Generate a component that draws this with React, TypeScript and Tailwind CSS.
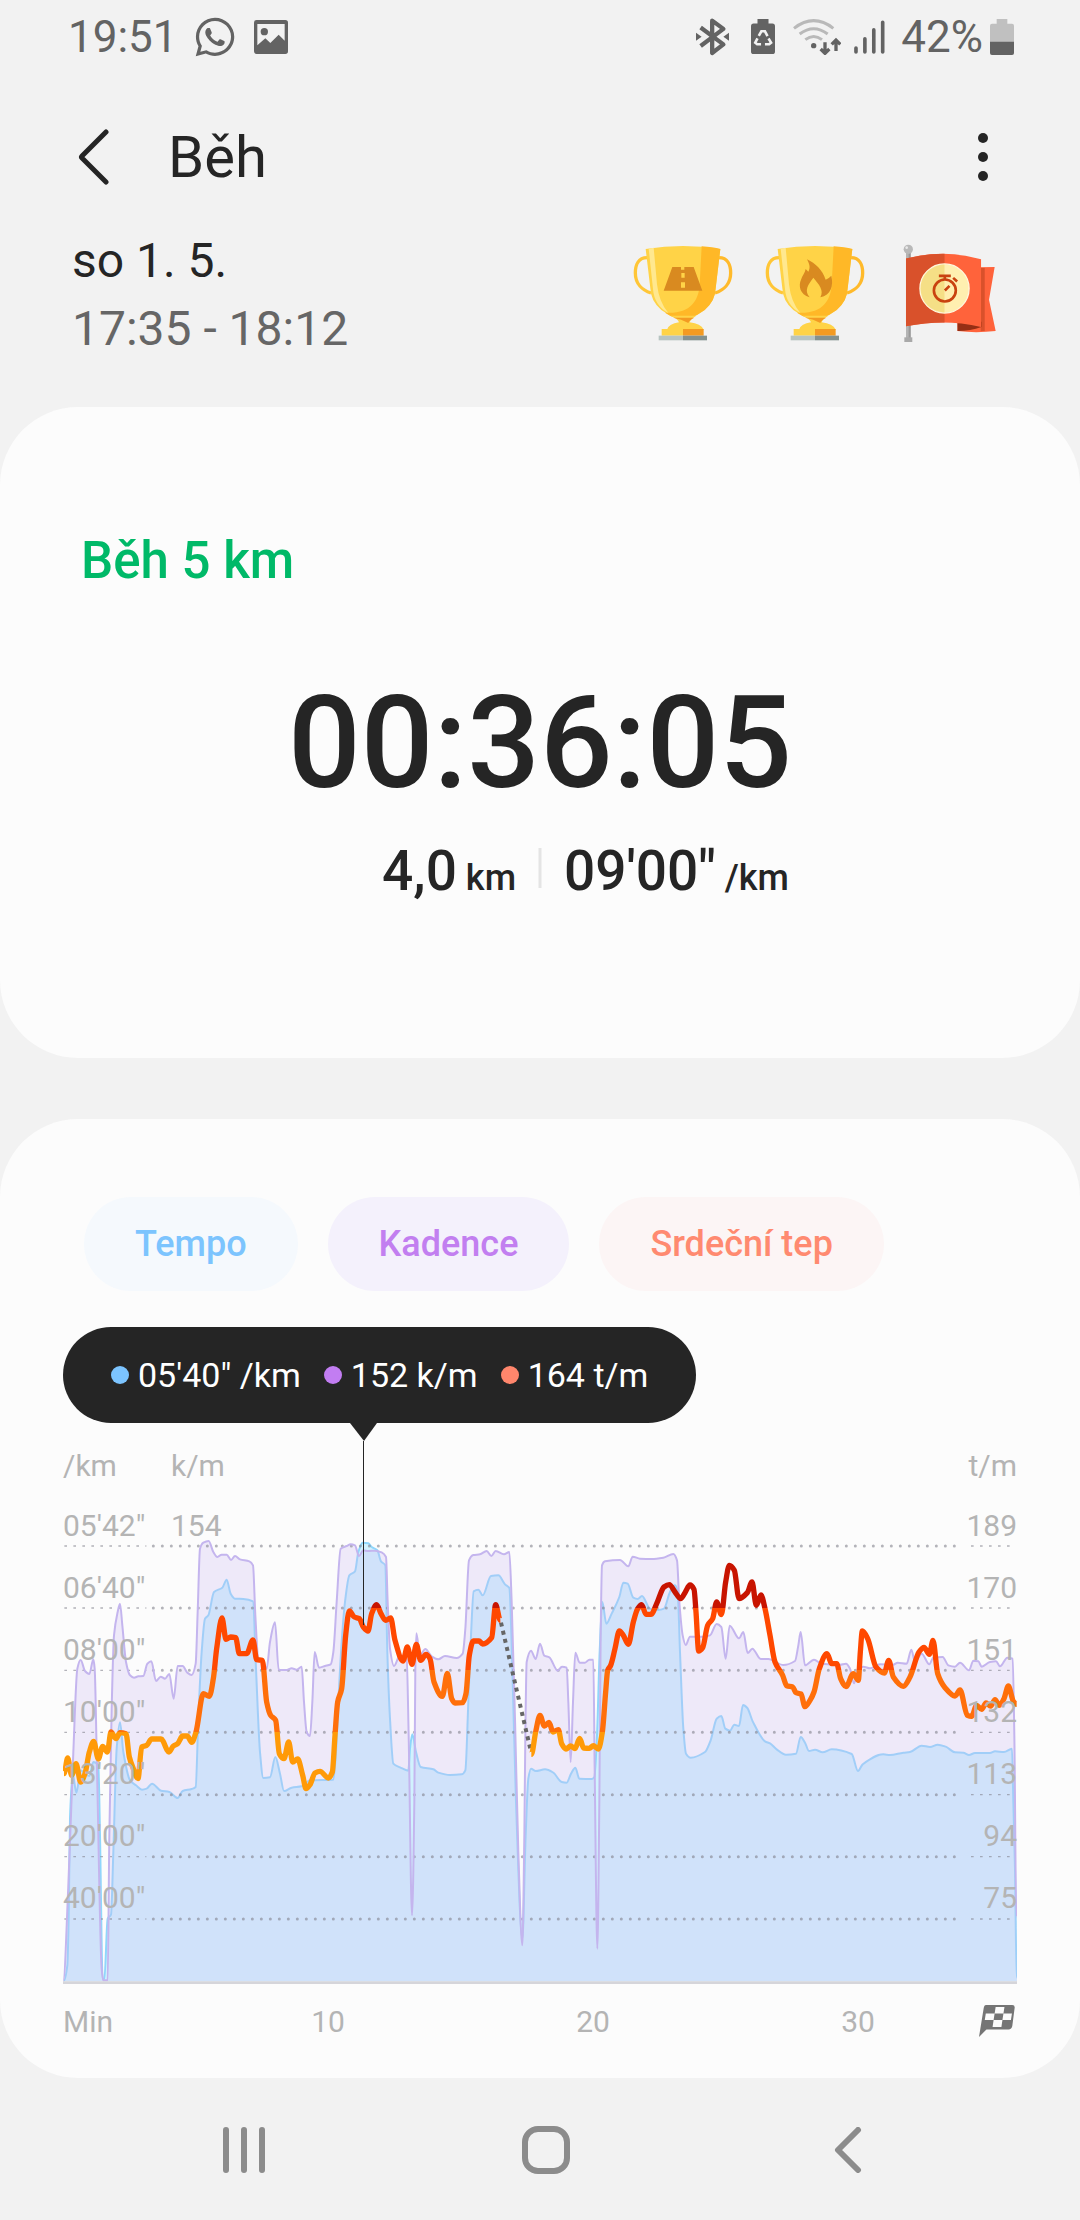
import type { ReactNode } from "react";
import { FaWhatsapp } from "react-icons/fa";

type Point = [number, number];

const PLOT_WIDTH = 2862;
const PLOT_BOTTOM = 1438;
const TOTAL_MINUTES = 36;

const cadence: Point[] = [
  [1, 1435], [16, 1150], [31, 750], [43, 500], [53, 474], [66, 507], [79, 516], [91, 472], [95, 500],
  [102, 800], [116, 1400], [121, 1435], [134, 1435], [139, 1000], [146, 620], [153, 400], [164, 330],
  [171, 305], [178, 370], [189, 480], [201, 520], [213, 527], [226, 523], [241, 522], [253, 485],
  [265, 478], [279, 537], [293, 524], [306, 530], [319, 516], [332, 590], [344, 492], [359, 492],
  [373, 512], [386, 519], [398, 485], [404, 330], [411, 140], [421, 122], [437, 117], [451, 150],
  [463, 165], [476, 158], [491, 158], [504, 174], [516, 162], [531, 172], [559, 178], [570, 190],
  [577, 340], [586, 470], [598, 475], [611, 500], [621, 420], [636, 361], [647, 503], [671, 504],
  [686, 499], [701, 503], [716, 494], [723, 600], [731, 690], [741, 702], [748, 600], [755, 450],
  [768, 497], [786, 492], [803, 487], [811, 450], [821, 300], [833, 140], [851, 132], [863, 127],
  [876, 130], [888, 162], [901, 145], [916, 147], [936, 146], [956, 151], [969, 165], [974, 300],
  [981, 440], [993, 492], [1011, 460], [1031, 470], [1037, 700], [1047, 1240], [1054, 900], [1057, 500],
  [1060, 394], [1071, 460], [1087, 441], [1106, 463], [1126, 472], [1146, 462], [1181, 468],
  [1199, 455], [1207, 380], [1218, 175], [1231, 159], [1251, 157], [1271, 147], [1285, 162],
  [1298, 147], [1323, 157], [1339, 150], [1346, 300], [1356, 650], [1366, 1050], [1378, 1330],
  [1384, 1000], [1387, 700], [1391, 480], [1404, 446], [1418, 471], [1431, 425], [1444, 461],
  [1459, 466], [1484, 506], [1497, 494], [1511, 497], [1516, 600], [1523, 780], [1530, 600],
  [1537, 452], [1550, 482], [1566, 482], [1579, 473], [1591, 473], [1595, 800], [1603, 1340],
  [1609, 900], [1613, 400], [1617, 190], [1626, 178], [1671, 174], [1696, 193], [1709, 164],
  [1731, 170], [1766, 171], [1801, 167], [1831, 156], [1842, 175], [1849, 300], [1859, 400],
  [1868, 429], [1881, 404], [1921, 404], [1941, 400], [1961, 366], [1975, 375], [1988, 470],
  [2000, 371], [2028, 409], [2041, 390], [2054, 453], [2068, 440], [2093, 471], [2116, 471],
  [2161, 489], [2196, 477], [2206, 430], [2213, 390], [2226, 490], [2253, 473], [2276, 485],
  [2331, 488], [2349, 485], [2361, 500], [2373, 544], [2386, 500], [2401, 494], [2421, 499],
  [2451, 487], [2491, 488], [2504, 482], [2531, 485], [2545, 443], [2556, 480], [2576, 455],
  [2599, 487], [2611, 467], [2639, 465], [2656, 490], [2676, 494], [2691, 482], [2718, 505],
  [2731, 476], [2746, 478], [2756, 494], [2781, 480], [2799, 478], [2811, 493], [2833, 467],
  [2849, 470], [2854, 700], [2860, 1245],
];

const pace: Point[] = [
  [3, 1435], [13, 1390], [17, 1250], [21, 950], [29, 815], [40, 872], [53, 805], [66, 815], [79, 822],
  [91, 780], [106, 790], [111, 1000], [119, 1432], [124, 1432], [134, 1250], [144, 1238], [151, 1050],
  [161, 740], [171, 661], [181, 750], [201, 835], [219, 850], [237, 863], [251, 860], [267, 845],
  [294, 866], [319, 870], [344, 888], [359, 867], [386, 861], [398, 855], [406, 650], [416, 450],
  [426, 350], [436, 340], [453, 270], [478, 257], [491, 233], [503, 275], [516, 290], [541, 291],
  [570, 298], [579, 500], [591, 750], [601, 828], [621, 826], [637, 765], [651, 815], [663, 867],
  [686, 857], [716, 853], [741, 835], [811, 833], [819, 750], [826, 600], [836, 420], [846, 300],
  [859, 220], [876, 208], [886, 150], [899, 122], [916, 124], [926, 135], [943, 145], [954, 178],
  [967, 190], [973, 450], [981, 650], [991, 785], [1011, 796], [1036, 806], [1041, 740], [1048, 697],
  [1059, 750], [1073, 795], [1111, 802], [1126, 812], [1161, 819], [1196, 817], [1207, 805],
  [1216, 600], [1224, 400], [1232, 268], [1246, 263], [1259, 280], [1284, 222], [1306, 220],
  [1326, 247], [1339, 258], [1348, 500], [1359, 900], [1378, 1310], [1388, 1000], [1396, 830],
  [1404, 800], [1418, 807], [1446, 802], [1471, 812], [1496, 840], [1511, 842], [1524, 815],
  [1537, 797], [1549, 830], [1586, 831], [1594, 825], [1602, 700], [1610, 450], [1618, 300],
  [1630, 365], [1646, 335], [1669, 285], [1681, 242], [1694, 245], [1711, 287], [1724, 291],
  [1737, 282], [1761, 320], [1786, 324], [1803, 320], [1821, 270], [1836, 250], [1844, 270],
  [1851, 450], [1861, 680], [1869, 755], [1883, 767], [1926, 750], [1943, 715], [1961, 650],
  [1975, 642], [1987, 680], [2001, 686], [2014, 668], [2028, 672], [2040, 609], [2053, 618],
  [2069, 658], [2106, 718], [2121, 724], [2141, 742], [2169, 758], [2199, 755], [2213, 705],
  [2226, 722], [2238, 747], [2256, 743], [2279, 751], [2306, 742], [2366, 756], [2385, 807],
  [2399, 787], [2461, 757], [2481, 759], [2521, 752], [2541, 750], [2576, 731], [2601, 735],
  [2624, 728], [2648, 734], [2676, 751], [2701, 752], [2718, 759], [2736, 753], [2781, 753],
  [2796, 748], [2823, 750], [2847, 740], [2851, 900], [2856, 1100], [2861, 1430],
];

const heartRateStart: Point[] = [
  [3, 815], [14, 768], [26, 820], [39, 785], [53, 840], [66, 815], [79, 750], [92, 718], [106, 771],
  [119, 733], [133, 750], [144, 690], [159, 710], [171, 692], [189, 695], [199, 765], [211, 800],
  [225, 830], [236, 735], [251, 730], [266, 711], [294, 711], [318, 750], [331, 732], [344, 725],
  [359, 702], [373, 702], [386, 721], [399, 690], [421, 575], [439, 583], [451, 530], [461, 440],
  [477, 348], [489, 412], [503, 405], [518, 407], [529, 455], [551, 455], [570, 414], [581, 473],
  [598, 475], [611, 600], [623, 640], [638, 655], [649, 755], [663, 770], [677, 720], [689, 780],
  [704, 771], [719, 820], [729, 860], [741, 848], [756, 813], [771, 808], [796, 828], [808, 810],
  [816, 700], [824, 600], [836, 560], [848, 400], [859, 327], [874, 345], [889, 350], [901, 375],
  [915, 387], [926, 335], [941, 308], [954, 335], [968, 355], [983, 348], [996, 415], [1020, 477],
  [1033, 435], [1047, 487], [1060, 427], [1073, 475], [1089, 457], [1101, 470], [1113, 540],
  [1138, 583], [1153, 514], [1166, 590], [1176, 603], [1199, 602], [1209, 575], [1219, 460],
  [1231, 417], [1248, 417], [1259, 426], [1286, 407], [1298, 308], [1312, 355],
];

const heartRateEnd: Point[] = [
  [1405, 757], [1418, 690], [1431, 640], [1444, 672], [1458, 661], [1470, 690], [1486, 683],
  [1496, 725], [1509, 741], [1523, 732], [1536, 740], [1550, 709], [1562, 738], [1579, 739],
  [1591, 731], [1606, 741], [1618, 690], [1628, 570], [1634, 505], [1643, 490], [1656, 440],
  [1669, 387], [1681, 400], [1696, 427], [1711, 360], [1724, 320], [1736, 308], [1749, 337],
  [1764, 337], [1781, 305], [1803, 255], [1819, 248], [1836, 270], [1853, 290], [1866, 272],
  [1881, 249], [1893, 262], [1899, 330], [1907, 447], [1919, 437], [1934, 370], [1949, 350],
  [1961, 300], [1975, 338], [1988, 240], [1999, 190], [2014, 205], [2028, 290], [2053, 272],
  [2067, 240], [2080, 310], [2094, 279], [2106, 320], [2121, 400], [2136, 480], [2159, 520],
  [2171, 551], [2189, 555], [2199, 572], [2214, 576], [2226, 614], [2241, 595], [2253, 570],
  [2269, 500], [2292, 455], [2306, 485], [2321, 485], [2333, 530], [2349, 554], [2371, 515],
  [2386, 535], [2392, 450], [2398, 387], [2414, 410], [2439, 495], [2464, 513], [2477, 475],
  [2491, 525], [2521, 553], [2541, 525], [2568, 450], [2583, 436], [2599, 457], [2610, 415],
  [2624, 515], [2646, 557], [2676, 582], [2691, 564], [2713, 640], [2726, 643], [2741, 610],
  [2756, 622], [2769, 603], [2783, 612], [2796, 593], [2809, 610], [2823, 590], [2836, 552],
  [2851, 598], [2861, 607],
];

const gridLines = [132, 318, 505, 691, 878, 1064, 1251];

const axisRows = [
  { pace: "05'42\"", cadence: "154", pulse: "189" },
  { pace: "06'40\"", pulse: "170" },
  { pace: "08'00\"", pulse: "151" },
  { pace: "10'00\"", pulse: "132" },
  { pace: "13'20\"", pulse: "113" },
  { pace: "20'00\"", pulse: "94" },
  { pace: "40'00\"", pulse: "75" },
];

const minuteTicks = [10, 20, 30];

const readings = [
  { dot: "bg-[#7cc4ff]", text: "05'40\" /km" },
  { dot: "bg-[#c27df2]", text: "152 k/m" },
  { dot: "bg-[#ff866c]", text: "164 t/m" },
];

// Monotone cubic, so the curve never overshoots its samples
const toPath = (points: Point[]) => {
  const slope = (a: Point, b: Point) => (b[1] - a[1]) / (b[0] - a[0]);
  const tangents = points.map((point, i) => {
    if (i === 0 || i === points.length - 1) return 0;
    const before = slope(points[i - 1], point);
    const after = slope(point, points[i + 1]);
    return before * after <= 0 ? 0 : (2 * before * after) / (before + after);
  });

  return points.reduce((path, [x, y], i) => {
    if (i === 0) return `M${x} ${y}`;
    const [px, py] = points[i - 1];
    const third = (x - px) / 3;
    return `${path}C${px + third} ${py + tangents[i - 1] * third} ${x - third} ${y - tangents[i] * third} ${x} ${y}`;
  }, "");
};

const toArea = (points: Point[]) => `${toPath(points)}L${PLOT_WIDTH} ${PLOT_BOTTOM}L0 ${PLOT_BOTTOM}Z`;

const StatusBar = () => (
  <div className="flex h-[74px] items-center justify-between pl-[68px] pr-[66px] text-[44px] leading-none text-[#636363]">
    <div className="flex items-center">
      <span>19:51</span>
      <FaWhatsapp className="ml-[15px] size-[44px]" />
      <svg viewBox="0 0 102 102" className="ml-[17px] w-[34px]" fill="currentColor">
        <path
          fillRule="evenodd"
          d="M8 0H94Q102 0 102 8V94Q102 102 94 102H8Q0 102 0 94V8Q0 0 8 0ZM10 12V76L34 55L49 69L74 44L92 62V12Z"
        />
        <circle cx="31" cy="35" r="11" />
      </svg>
    </div>

    <div className="flex items-center">
      <svg viewBox="0 0 100 114" className="w-[33px]" fill="none" stroke="currentColor" strokeWidth="13">
        <path strokeLinejoin="round" d="M14 29L83 80L49 106V8L83 33L14 85" />
        <path fill="currentColor" stroke="none" d="M0 45L17 57L0 69ZM100 45L83 57L100 69Z" />
      </svg>
      <svg viewBox="0 0 74 108" className="ml-[22px] w-6">
        <path fill="currentColor" d="M20 0H54V14H66Q74 14 74 22V100Q74 108 66 108H8Q0 108 0 100V22Q0 14 8 14H20Z" />
        <g fill="none" stroke="#f2f2f2" strokeWidth="8">
          <path d="M24 52L32 38H43L51 53" />
          <path d="M20 60L13 73L19 78H31" />
          <path d="M54 60L62 73L56 78H43" />
        </g>
      </svg>
      <svg viewBox="0 0 144 108" className="ml-[18px] w-12" fill="none">
        <g stroke="#b9b9b9" strokeWidth="9">
          <path d="M3 28Q62 -18 121 28" />
          <path d="M20 45Q62 13 104 45" />
          <path d="M37 62Q62 43 87 62" />
        </g>
        <circle cx="62" cy="80" r="8" fill="currentColor" />
        <g stroke="currentColor" strokeWidth="10">
          <path d="M96 70V102M83 90L96 103L109 90" />
          <path d="M129 96V64M116 76L129 63L142 76" />
        </g>
      </svg>
      <svg viewBox="0 0 94 104" className="ml-[13px] w-[31px]" stroke="currentColor" strokeWidth="11" strokeLinecap="round">
        <path d="M6 85V97M33 57V97M60 30V97M87 7V97" />
      </svg>
      <span className="ml-4">42%</span>
      <svg viewBox="0 0 72 108" className="ml-[7px] w-6">
        <path fill="#c0c0c0" d="M20 0H52V14H66Q72 14 72 20V70H0V20Q0 14 6 14H20Z" />
        <path fill="currentColor" d="M0 68H72V102Q72 108 66 108H6Q0 108 0 102Z" />
      </svg>
    </div>
  </div>
);

const Trophy = ({ label, children }: { label: string; children: ReactNode }) => (
  <svg viewBox="0 0 300 290" className="w-[100px]" role="img" aria-label={label}>
    <path fill="none" stroke="#ffc637" strokeWidth="10" d="M42 38C16 38 7 60 7 84C7 116 28 136 54 144" />
    <path fill="none" stroke="#ffba2b" strokeWidth="10" d="M258 38C284 38 293 60 293 84C293 116 272 136 246 144" />
    <path fill="#ffd347" d="M38 12Q150 -6 262 12L248 130Q247 168 215 195Q192 212 170 220H130Q108 212 85 195Q53 168 52 130Z" />
    <path fill="#ffb827" d="M206 4Q240 6 262 12L248 130Q247 168 215 195Q192 212 170 220H130Q112 214 96 203C170 208 196 170 200 120Z" />
    <path fill="#ffe88f" d="M47 11L62 8L72 118Q78 172 106 204Q64 182 60 132Z" />
    <path fill="#ffd347" d="M112 212Q134 220 138 232Q108 236 102 254H212Q204 236 170 232Q172 222 190 212Z" />
    <path fill="#f39a22" d="M120 218H184Q168 226 166 234Q146 222 120 218Z" />
    <path fill="#ffd347" d="M86 252H150V272H86Z" />
    <path fill="#f39a22" d="M150 252H212V272H150Z" />
    <path fill="#b7c4c2" d="M77 272H150V286H77Z" />
    <path fill="#84918f" d="M150 272H222V286H150Z" />
    {children}
  </svg>
);

const FlagBadge = () => (
  <svg viewBox="0 0 280 298" className="ml-[38px] w-[93px]" role="img" aria-label="Nejlepší čas">
    <path fill="#b4b4b4" d="M9 22H23V284H9Z" />
    <path fill="#999999" d="M17 22H23V284H17Z" />
    <circle cx="16" cy="16" r="14" fill="#b9b9b9" />
    <circle cx="11" cy="11" r="4" fill="#e9e9e9" />
    <path fill="#a9a9a9" d="M4 281H28V296H4Z" />
    <path fill="#ff633b" d="M230 70L276 69L259 168L279 262Q220 269 164 262V236H230Z" />
    <path fill="#d9512b" d="M234 72H246V262H234Z" />
    <path fill="#962f14" d="M164 234H236V250Q204 262 164 262Z" />
    <path fill="#ff633b" d="M9 44Q122 14 235 46V250Q122 224 9 248Z" />
    <path fill="#d9512b" d="M9 44Q66 29 125 29V236Q66 236 9 248Z" />
    <circle cx="125" cy="134" r="74" fill="#ffefb0" stroke="#fff7dc" strokeWidth="4" />
    <path fill="#f5df86" d="M125 62A72 72 0 0 0 125 206Z" />
    <g fill="none" stroke="#c9420f" strokeWidth="8">
      <circle cx="126" cy="140" r="33" />
      <path d="M108 96H144M126 96V108M126 140L140 126M151 102L163 113" />
    </g>
  </svg>
);

const Header = () => (
  <header>
    <div className="flex h-[153px] items-center justify-between pl-[71px] pr-[84px] pt-3">
      <div className="flex items-center">
        <button aria-label="Zpět" className="p-1">
          <svg viewBox="0 0 34 58" className="h-[58px]" fill="none" stroke="#252525" strokeWidth="5" strokeLinecap="round" strokeLinejoin="round">
            <path d="M31 4L7 28Q6 29 7 30L31 54" />
          </svg>
        </button>
        <h1 className="ml-[55px] text-[58px] leading-none">Běh</h1>
      </div>
      <button aria-label="Další možnosti" className="p-2">
        <svg viewBox="0 0 10 48" className="h-12" fill="#252525">
          <circle cx="5" cy="5" r="5" />
          <circle cx="5" cy="24" r="5" />
          <circle cx="5" cy="43" r="5" />
        </svg>
      </button>
    </div>

    <div className="flex items-center justify-between pb-11 pl-[72px] pr-[84px]">
      <div className="text-[48px] leading-[68px]">
        <p>so 1. 5.</p>
        <p className="text-[#666666]">17:35 - 18:12</p>
      </div>
      <div className="flex items-center pb-1">
        <div className="flex gap-8">
          <Trophy label="Nejdelší vzdálenost">
            <path fill="#d98a20" d="M118 66H144V74H154V66H182L208 137H92Z" />
            <path fill="#ffd347" d="M145 84H155V98H145ZM144 112H156V128H144Z" />
          </Trophy>
          <Trophy label="Nejvíce kalorií">
            <path
              fill="#d98a20"
              d="M126 43C152 56 172 74 182 104Q192 100 199 92C206 122 198 150 166 157C178 136 162 118 145 98C130 118 116 136 134 157C104 148 100 122 108 104C112 92 120 84 122 72L130 80C138 66 132 56 126 43Z"
            />
          </Trophy>
        </div>
        <FlagBadge />
      </div>
    </div>
  </header>
);

const SummaryCard = () => (
  <section className="rounded-[78px] bg-[#fcfcfc] pb-[148px] pt-[124px] font-medium">
    <h2 className="px-[81px] text-[51px] leading-[60px] text-[#00b968]">Běh 5 km</h2>
    <p className="mt-[88px] text-center text-[128px] leading-none">00:36:05</p>
    <div className="mt-8 grid grid-cols-2 text-[55px] leading-[64px]">
      <p className="pr-6 text-right">
        4,0<span className="text-[36px]"> km</span>
      </p>
      <p className="relative pl-6">
        <span className="absolute left-0 top-[9px] h-10 w-[3px] -translate-x-1/2 bg-[#e4e4e4]" />
        09'00"<span className="text-[36px]"> /km</span>
      </p>
    </div>
  </section>
);

const Tooltip = () => (
  <div className="relative mt-9 flex h-24 w-max items-center gap-[23px] rounded-full bg-[#252525] px-12 text-[34px] text-white">
    {readings.map(({ dot, text }) => (
      <span key={text} className="flex items-center gap-[9px]">
        <span className={`size-[18px] rounded-full ${dot}`} />
        {text}
      </span>
    ))}
    <div className="absolute left-[287px] top-full z-10 flex w-[27px] flex-col items-center">
      <svg viewBox="0 0 27 18" className="w-[27px]" fill="#252525">
        <path d="M0 0H27L14 18Z" />
      </svg>
      <span className="h-[184px] w-px bg-[#252525]" />
    </div>
  </div>
);

const Chart = () => (
  <div className="relative">
    <svg viewBox="0 -15 2862 1461" className="block w-full" role="img" aria-label="Tempo, kadence a srdeční tep">
      <defs>
        <linearGradient id="zones" gradientUnits="userSpaceOnUse" x1="0" y1="0" x2="0" y2="1000">
          <stop offset="31.8%" stopColor="#c81400" />
          <stop offset="31.8%" stopColor="#ff4800" />
          <stop offset="50.5%" stopColor="#ff4800" />
          <stop offset="50.5%" stopColor="#ff6f0a" />
          <stop offset="69%" stopColor="#ff6f0a" />
          <stop offset="69%" stopColor="#ff9a08" />
        </linearGradient>
      </defs>

      <path d={toArea(pace)} fill="#d1f2fe" />
      <path d={toPath(pace)} fill="none" stroke="#8fd6fb" strokeWidth="6" />
      <path d={toArea(cadence)} fill="#cdbcf3" fillOpacity="0.3" />

      {gridLines.map((y) => (
        <g key={y} stroke="#82828c" strokeOpacity="0.6">
          <path d={`M4 ${y}H250`} strokeWidth="4" strokeDasharray="8 19" />
          <path d={`M271 ${y}H2700`} strokeWidth="9" strokeDasharray="0 27" strokeLinecap="round" />
          <path d={`M2724 ${y}H2850`} strokeWidth="4" strokeDasharray="8 19" />
        </g>
      ))}

      <path d={toPath(cadence)} fill="none" stroke="#c4b5ee" strokeWidth="6" strokeLinejoin="round" />
      <path d={`M0 1442H${PLOT_WIDTH}`} stroke="#d5d5da" strokeWidth="8" />

      <path d="M1314 362L1403 745" stroke="#666666" strokeWidth="12" strokeDasharray="12 13" />
      <g fill="none" stroke="url(#zones)" strokeWidth="16" strokeLinejoin="round">
        <path d={toPath(heartRateStart)} />
        <path d={toPath(heartRateEnd)} />
      </g>
    </svg>

    {/* Axis values lie over the curves */}
    <div className="absolute inset-x-0 top-0">
      {axisRows.map((row) => (
        <div key={row.pulse} className="flex h-[62px] leading-[58px]">
          <span className="w-[108px]">{row.pace}</span>
          <span>{row.cadence}</span>
          <span className="ml-auto">{row.pulse}</span>
        </div>
      ))}
    </div>
  </div>
);

const ChartCard = () => (
  <section className="mt-[61px] rounded-[78px] bg-[#fcfcfc] px-[63px] pb-[25px] pt-[78px]">
    <div className="flex gap-[30px] pl-[21px] text-[36px] font-medium">
      <button className="h-[94px] rounded-full bg-[#f5f9fd] px-[51px] text-[#7cc4fe]">Tempo</button>
      <button className="h-[94px] rounded-full bg-[#f4f1fc] px-[51px] text-[#c27ff0]">Kadence</button>
      <button className="h-[94px] rounded-full bg-[#fcf5f5] px-[51px] text-[#ff8a70]">Srdeční tep</button>
    </div>

    <Tooltip />

    <div className="text-[30px] text-[#b4b4b4]">
      <div className="mt-3 flex h-[62px] leading-[62px]">
        <span className="w-[108px]">/km</span>
        <span>k/m</span>
        <span className="ml-auto">t/m</span>
      </div>

      <Chart />

      <div className="relative mt-[7px] h-[62px] leading-[62px]">
        <span>Min</span>
        {minuteTicks.map((minute) => (
          <span
            key={minute}
            className="absolute -translate-x-1/2"
            style={{ left: `${(minute / TOTAL_MINUTES) * 100}%` }}
          >
            {minute}
          </span>
        ))}
        <svg viewBox="0 0 106 94" className="absolute right-[2px] top-[14px] w-[36px]">
          <path fill="#757575" d="M20 0H98Q106 0 105 8L98 62Q96 72 87 72H22L0 94L14 8Q15 0 20 0Z" />
          <path fill="#fcfcfc" d="M49 6H75L72 25H46ZM20 25H46L43 44H17ZM72 25H97L94 44H69ZM43 44H69L66 65H40Z" />
        </svg>
      </div>
    </div>
  </section>
);

const NavigationBar = () => (
  <nav className="grid h-36 grid-cols-3 place-items-center pl-[93px] pr-[81px]">
    <button aria-label="Poslední aplikace">
      <svg viewBox="0 0 42 46" className="h-[46px]" stroke="#8c8c8c" strokeWidth="6" strokeLinecap="round">
        <path d="M3 3V43M21 3V43M39 3V43" />
      </svg>
    </button>
    <button aria-label="Domů">
      <svg viewBox="0 0 48 48" className="h-12" fill="none" stroke="#8c8c8c" strokeWidth="6">
        <rect x="3" y="3" width="42" height="42" rx="13" />
      </svg>
    </button>
    <button aria-label="Zpět">
      <svg viewBox="0 0 28 46" className="h-[46px]" fill="none" stroke="#8c8c8c" strokeWidth="6" strokeLinecap="round" strokeLinejoin="round">
        <path d="M24 3L4 23L24 43" />
      </svg>
    </button>
  </nav>
);

const App = () => {
  return (
    <div className="min-h-screen bg-[#f2f2f2] font-[Roboto,sans-serif] text-[#252525]">
      <StatusBar />
      <Header />
      <main>
        <SummaryCard />
        <ChartCard />
      </main>
      <NavigationBar />
    </div>
  );
};

export default App;
